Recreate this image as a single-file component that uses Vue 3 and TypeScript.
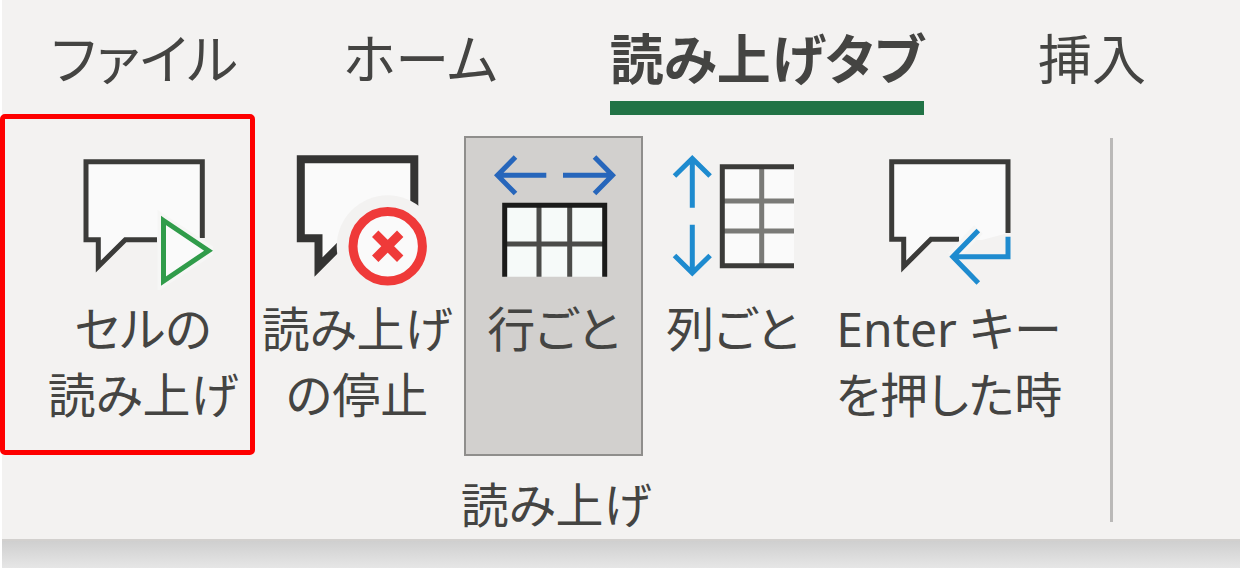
<script setup lang="ts">
import { ref } from 'vue'

type IconName = 'play' | 'stop' | 'rows' | 'columns' | 'enter'

interface Command {
  id: IconName
  lines: string[]
  size: 'wide' | 'narrow' | 'extra'
  toggle?: boolean
}

const tabs: string[] = ['ファイル', 'ホーム', '読み上げタブ', '挿入']
const activeTab = ref<string>('読み上げタブ')
const direction = ref<IconName>('rows')

const commands: Command[] = [
  { id: 'play', lines: ['セルの', '読み上げ'], size: 'wide' },
  { id: 'stop', lines: ['読み上げ', 'の停止'], size: 'wide' },
  { id: 'rows', lines: ['行ごと'], size: 'narrow', toggle: true },
  { id: 'columns', lines: ['列ごと'], size: 'narrow', toggle: true },
  { id: 'enter', lines: ['Enter キー', 'を押した時'], size: 'extra' },
]

function run(command: Command): void {
  if (command.toggle) direction.value = command.id
}
</script>

<template>
  <div class="window">
    <header class="ribbon">
      <nav class="tabs" role="tablist">
        <button
          v-for="tab in tabs"
          :key="tab"
          type="button"
          role="tab"
          class="tab"
          :class="{ active: tab === activeTab }"
          :aria-selected="tab === activeTab"
          @click="activeTab = tab"
        >{{ tab }}</button>
      </nav>

      <div class="groups">
        <section class="group" aria-labelledby="group-title">
          <div class="commands">
            <button
              v-for="command in commands"
              :key="command.id"
              type="button"
              class="command"
              :class="[command.size, { pressed: command.toggle && command.id === direction }]"
              :aria-pressed="command.toggle ? command.id === direction : undefined"
              @click="run(command)"
            >
              <svg class="icon" viewBox="0 0 140 140" aria-hidden="true">
                <template v-if="command.id === 'play'">
                  <path class="paper" d="M13 11.7H129.3V88L90 88L84 89.7H52.3L25.3 117V89.7H13Z" />
                  <path class="ink" d="M84 89.7H52.3L25.3 116.5V89.7H13V11.7H129.3V88" />
                  <path class="halo" d="M90.5 71L135.5 100.7L90.5 130.5Z" />
                  <path class="play" d="M90.5 70.5L135.5 100.7L90.5 131Z" />
                </template>
                <template v-else-if="command.id === 'stop'">
                  <path class="paper" d="M13.8 9.2H127V88H70L31.5 117V88H13.8Z" />
                  <path class="ink bold" d="M60 88.5L31.5 117V88.2H13.8V9.2H127.3V80" />
                  <circle class="cutout" cx="100.7" cy="96.3" r="51" />
                  <circle class="ring" cx="100.7" cy="96.3" r="34.7" />
                  <path class="cross" d="M88.2 83.8L113.2 108.8M113.2 83.8L88.2 108.8" />
                </template>
                <template v-else-if="command.id === 'rows'">
                  <path class="arrow deep" d="M62.3 25.3H14M31.5 7L13.5 25.3L31.5 43.6" />
                  <path class="arrow deep" d="M79 25.3H128M110.5 7L128.5 25.3L110.5 43.6" />
                  <path class="sheet" d="M20.7 55.3H120.7V126.7H20.7Z" />
                  <path class="ink inner" d="M55 55V126.7M85.7 55V126.7M20.7 94H120.7" />
                  <path class="ink black" d="M20.7 126.7V55.3H120.7V126.7" />
                </template>
                <template v-else-if="command.id === 'columns'">
                  <path class="arrow" d="M29.3 57.7V9M11.5 26L29.3 8.5L47.1 26" />
                  <path class="arrow" d="M29.3 74.7V123M11.5 105.5L29.3 123L47.1 105.5" />
                  <path class="paper" d="M59.3 16.7H131V115.7H59.3Z" />
                  <path class="ink pale" d="M98.7 17V115M59.3 51H131M59.3 81H131" />
                  <path class="ink" d="M131 16.7H59.3V115.7H131" />
                </template>
                <template v-else>
                  <path class="paper" d="M12.7 11.7H129V83L103 90H52L24.7 117V89.3H12.7Z" />
                  <path class="ink" d="M80 89.3H52L24.7 116.5V89.3H12.7V11.7H129V83" />
                  <path class="halo" d="M99.5 79.5L73.5 106.7" />
                  <path class="arrow" d="M129 86.7V106.7H75M99.3 80.4L73.8 106.7L99.3 133" />
                </template>
              </svg>
              <span class="label">
                <span v-for="line in command.lines" :key="line" class="line">{{ line }}</span>
              </span>
              <span v-if="command.id === 'play'" class="callout" aria-hidden="true"></span>
            </button>
          </div>
          <h2 id="group-title" class="group-title">読み上げ</h2>
        </section>
        <span class="divider"></span>
      </div>
    </header>
    <main class="sheet-edge"></main>
  </div>
</template>

<style>
body {
  margin: 0;
  background: #fff;
}
</style>

<style scoped>
.window {
  box-sizing: border-box;
  min-height: 100vh;
  padding-left: 2px;
  display: flex;
  flex-direction: column;
  font-family: "Noto Sans", "Noto Sans CJK JP", sans-serif;
  font-feature-settings: "palt";
  color: #444442;
  background: #fff;
}

button {
  font: inherit;
  font-feature-settings: inherit;
  color: inherit;
  background: none;
  border: 0;
  padding: 0;
  margin: 0;
}

.ribbon {
  background: #f3f2f1;
  padding-bottom: 2px;
  border-bottom: 2px solid #d2d0ce;
}

.tabs {
  display: grid;
  grid-template-columns: 285fr 267fr 426fr 224fr 36fr;
  justify-items: center;
  padding: 23px 0 21px;
}

.tab {
  font-size: 54px;
  line-height: 72px;
  padding-bottom: 6px;
  border-bottom: 14px solid transparent;
  white-space: nowrap;
}

.tab.active {
  font-weight: 700;
  border-bottom-color: #217346;
}

.groups {
  display: flex;
}

.group {
  padding: 0 34px;
}

.divider {
  width: 3px;
  margin: 2px 0 15px;
  background: #bab9b8;
}

.commands {
  display: flex;
}

.command {
  position: relative;
  box-sizing: border-box;
  min-height: 320px;
  padding-top: 12px;
  border: 2px solid transparent;
  display: flex;
  flex-direction: column;
  align-items: center;
}

.wide {
  width: 214px;
}

.narrow {
  width: 179px;
}

.extra {
  width: 254px;
}

.command.pressed {
  background: #d2d0ce;
  border-color: #8f8e8c;
}

.icon {
  width: 140px;
  height: 140px;
  flex: none;
}

.label {
  margin-top: 6px;
  font-size: 48px;
  line-height: 66px;
  text-align: center;
}

.line {
  display: block;
  white-space: nowrap;
}

.group-title {
  margin: 17px 0 0;
  font-size: 48px;
  font-weight: 400;
  line-height: 64px;
  text-align: center;
}

.callout {
  position: absolute;
  inset: -24px -7px -1px -38px;
  border: 5px solid #fe0000;
  border-radius: 5px;
  pointer-events: none;
}

.sheet-edge {
  flex: 1;
  min-height: 27px;
  background: linear-gradient(#cfcfcf, #e6e6e6);
}

.icon path,
.icon circle {
  fill: none;
}

.icon .paper {
  fill: #fafafa;
}

.icon .sheet {
  fill: #f6faf9;
}

.icon .cutout {
  fill: #f3f2f1;
}

.ink {
  stroke: #3b3b39;
  stroke-width: 5;
  stroke-miterlimit: 10;
}

.ink.bold {
  stroke: #343433;
  stroke-width: 8;
}

.ink.black {
  stroke: #1b1b1a;
}

.ink.inner {
  stroke: #4b4b49;
}

.ink.pale {
  stroke: #7a7a77;
}

.halo {
  stroke: #f6f6f5;
  stroke-width: 12;
}

.icon .play {
  fill: #fafafa;
  stroke: #309c4a;
  stroke-width: 5;
}

.icon .ring {
  fill: #fafafa;
  stroke: #ef3a39;
  stroke-width: 9;
}

.cross {
  stroke: #ef3a39;
  stroke-width: 9;
}

.arrow {
  stroke: #1e8bcf;
  stroke-width: 5;
}

.arrow.deep {
  stroke: #2766bb;
}
</style>
